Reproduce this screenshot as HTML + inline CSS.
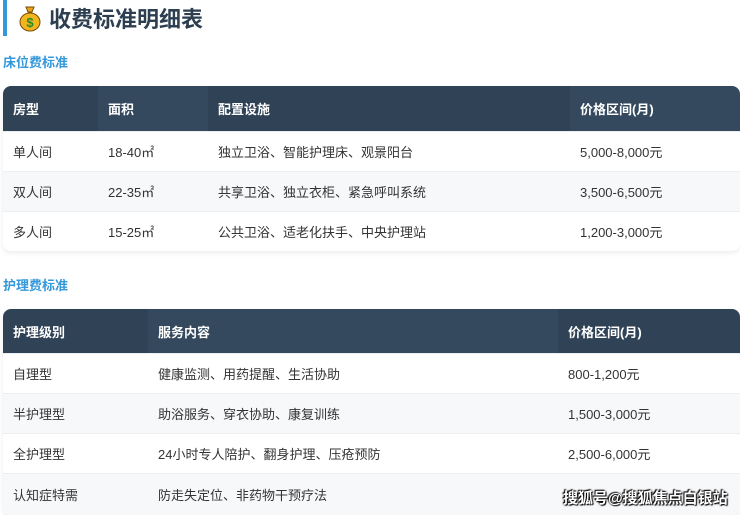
<!DOCTYPE html>
<html><head><meta charset="utf-8"><style>
*{margin:0;padding:0;box-sizing:border-box}
body{width:740px;height:514px;overflow:hidden;background:#fff;font-family:"Liberation Sans","Noto Sans CJK SC",sans-serif;position:relative}
.title{position:absolute;left:3px;top:0;height:36px;border-left:4px solid #3498db;padding-left:11px;display:flex;align-items:center;font-size:22px;font-weight:bold;color:#2c3e50}
.title .ic{width:24px;height:28px;margin-right:7px;position:relative}
.sec{position:absolute;left:3px;font-size:13px;font-weight:bold;color:#3498db}
table{position:absolute;left:3px;width:737px;border-collapse:separate;border-spacing:0;border-radius:8px;overflow:hidden;box-shadow:0 2px 6px rgba(0,0,0,.08);font-size:13px;color:#333;table-layout:fixed}
th{background:#2f4256;color:#fff;font-weight:bold;text-align:left;padding-left:10px}
th.b{background:#34495e}
td{padding-left:10px;border-top:1px solid #eceff2}
tr.e td{background:#f7f8fa}
.wm{position:absolute;left:563px;top:487px;font-size:15px;font-weight:bold;color:#fff;text-shadow:0 0 2px #000,1px 1px 1px #000,-1px -1px 1px #000}
</style></head><body>
<div class="title"><span class="ic"><svg width="24" height="28" viewBox="0 0 24 28"><path d="M8 3h8l-2 5h-4z" fill="#e8a21c" stroke="#7a4b00" stroke-width="1"/><ellipse cx="12" cy="18" rx="10" ry="9" fill="#f2b51e" stroke="#7a4b00" stroke-width="1"/><text x="12" y="23" font-size="13" font-weight="bold" fill="#2a8a2a" text-anchor="middle" font-family="Liberation Sans">$</text></svg></span>收费标准明细表</div>
<div class="sec" style="top:52px">床位费标准</div>
<table style="top:86px">
<tr style="height:45px"><th style="width:95px">房型</th><th class="b" style="width:110px">面积</th><th style="width:362px">配置设施</th><th class="b">价格区间(月)</th></tr>
<tr style="height:40px"><td>单人间</td><td>18-40㎡</td><td>独立卫浴、智能护理床、观景阳台</td><td>5,000-8,000元</td></tr>
<tr class="e" style="height:40px"><td>双人间</td><td>22-35㎡</td><td>共享卫浴、独立衣柜、紧急呼叫系统</td><td>3,500-6,500元</td></tr>
<tr style="height:40px"><td>多人间</td><td>15-25㎡</td><td>公共卫浴、适老化扶手、中央护理站</td><td>1,200-3,000元</td></tr>
</table>
<div class="sec" style="top:275px">护理费标准</div>
<table style="top:309px">
<tr style="height:44px"><th style="width:145px">护理级别</th><th class="b" style="width:410px">服务内容</th><th>价格区间(月)</th></tr>
<tr style="height:40px"><td>自理型</td><td>健康监测、用药提醒、生活协助</td><td>800-1,200元</td></tr>
<tr class="e" style="height:40px"><td>半护理型</td><td>助浴服务、穿衣协助、康复训练</td><td>1,500-3,000元</td></tr>
<tr style="height:40px"><td>全护理型</td><td>24小时专人陪护、翻身护理、压疮预防</td><td>2,500-6,000元</td></tr>
<tr class="e" style="height:42px"><td>认知症特需</td><td>防走失定位、非药物干预疗法</td><td></td></tr>
</table>
<div class="wm">搜狐号@搜狐焦点白银站</div>
</body></html>
